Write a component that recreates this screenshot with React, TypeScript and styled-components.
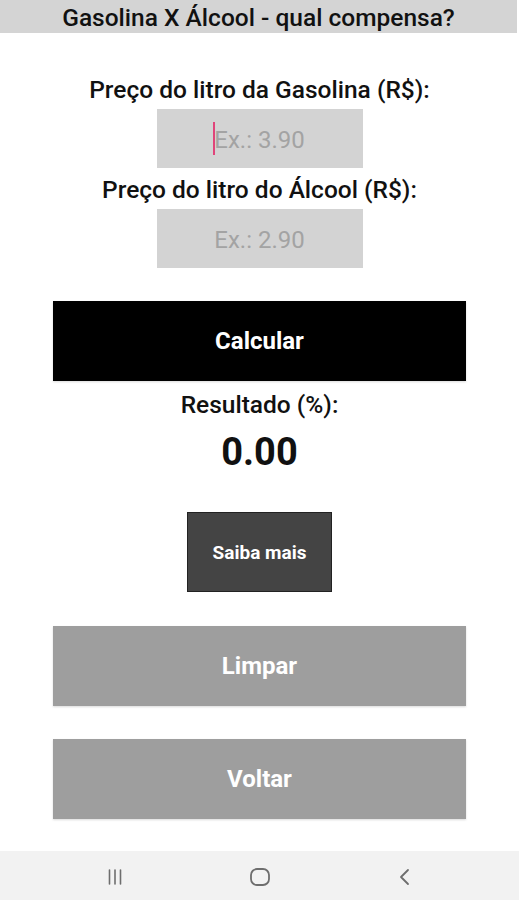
import styled, { createGlobalStyle } from "styled-components"

const GlobalStyle = createGlobalStyle`
    html, body {
        margin: 0;
        padding: 0;
        background: #ffffff;
    }
    * {
        box-sizing: border-box;
    }
`

export default function App() {
    return (
        <>
            <GlobalStyle />
            <Screen>
                <Header>Gasolina X Álcool - qual compensa?</Header>
                <Content>
                    <Label>Preço do litro da Gasolina (R$):</Label>
                    <Field>
                        <Caret />
                        <Placeholder>Ex.: 3.90</Placeholder>
                    </Field>
                    <Label $top={8}>Preço do litro do Álcool (R$):</Label>
                    <Field>
                        <Placeholder>Ex.: 2.90</Placeholder>
                    </Field>
                    <WideButton $bg="#000000" $top={33}>Calcular</WideButton>
                    <Label $top={10}>Resultado (%):</Label>
                    <Result>0.00</Result>
                    <SmallButton>Saiba mais</SmallButton>
                    <WideButton $bg="#9e9e9e" $top={34}>Limpar</WideButton>
                    <WideButton $bg="#9e9e9e" $top={33}>Voltar</WideButton>
                </Content>
                <NavBar>
                    <NavIcon>
                        <svg width="18" height="18" viewBox="0 0 18 18">
                            <g stroke="#6e6e6e" strokeWidth="1.6" strokeLinecap="round">
                                <line x1="3.5" y1="2" x2="3.5" y2="16" />
                                <line x1="9" y1="2" x2="9" y2="16" />
                                <line x1="14.5" y1="2" x2="14.5" y2="16" />
                            </g>
                        </svg>
                    </NavIcon>
                    <NavIcon>
                        <svg width="22" height="20" viewBox="0 0 22 20">
                            <rect x="2" y="2" width="18" height="16" rx="6" fill="none" stroke="#6e6e6e" strokeWidth="1.8" />
                        </svg>
                    </NavIcon>
                    <NavIcon>
                        <svg width="16" height="20" viewBox="0 0 16 20">
                            <polyline points="11,3 4,10 11,17" fill="none" stroke="#6e6e6e" strokeWidth="1.8" strokeLinecap="round" strokeLinejoin="round" />
                        </svg>
                    </NavIcon>
                </NavBar>
            </Screen>
        </>
    )
}

const Screen = styled.div`
    width: 519px;
    height: 900px;
    display: flex;
    flex-direction: column;
    background: #ffffff;
    font-family: Roboto, "Liberation Sans", sans-serif;
    overflow: hidden;
`
const Header = styled.div`
    height: 33px;
    margin-right: 2px;
    background-color: #d4d4d4;
    color: #111111;
    font-size: 24.5px;
    font-weight: 500;
    display: flex;
    align-items: center;
    justify-content: center;
    padding-top: 2px;
`
const Content = styled.div`
    flex: 1;
    display: flex;
    flex-direction: column;
    align-items: center;
    padding: 43px 53px 0;
`
const Label = styled.div<{ $top?: number }>`
    margin-top: ${p => p.$top ?? 0}px;
    font-size: 24.5px;
    font-weight: 500;
    color: #111111;
    line-height: 28px;
    white-space: nowrap;
`
const Field = styled.div`
    position: relative;
    width: 206px;
    height: 59px;
    margin-top: 5px;
    background-color: #d3d3d3;
    display: flex;
    align-items: center;
    justify-content: center;
`
const Placeholder = styled.span`
    font-size: 24px;
    color: #a3a3a3;
    padding-top: 2px;
`
const Caret = styled.span`
    position: absolute;
    left: 56px;
    top: 13px;
    width: 2px;
    height: 33px;
    background-color: #e0447a;
`
const WideButton = styled.div<{ $bg: string; $top: number }>`
    width: 413px;
    height: 80px;
    margin-top: ${p => p.$top}px;
    background-color: ${p => p.$bg};
    color: #ffffff;
    font-size: 24px;
    font-weight: 700;
    display: flex;
    align-items: center;
    justify-content: center;
    box-shadow: 0 1px 2px rgba(0, 0, 0, 0.15);
`
const Result = styled.div`
    margin-top: 11px;
    font-size: 38px;
    font-weight: 700;
    color: #111111;
    line-height: 44px;
`
const SmallButton = styled.div`
    width: 145px;
    height: 80px;
    margin-top: 38px;
    background-color: #444444;
    border: 1px solid #222222;
    color: #ffffff;
    font-size: 19px;
    font-weight: 700;
    display: flex;
    align-items: center;
    justify-content: center;
`
const NavBar = styled.div`
    height: 49px;
    background-color: #f2f2f2;
    display: flex;
    align-items: center;
    justify-content: center;
    gap: 123px;
    padding-top: 2px;
`
const NavIcon = styled.div`
    width: 22px;
    display: flex;
    align-items: center;
    justify-content: center;
`
